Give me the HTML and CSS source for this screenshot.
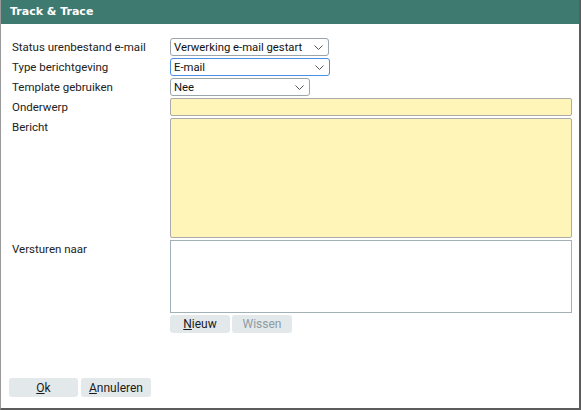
FILE: index.html
```html
<!DOCTYPE html>
<html lang="nl">
<head>
<meta charset="utf-8">
<title>Track &amp; Trace</title>
<link rel="stylesheet" href="styles.css">
</head>
<body>
<div class="window">
  <div class="header">Track &amp; Trace</div>
  <div class="form">
    <div class="label">Status urenbestand e-mail</div>
    <div class="field"><div class="select w159"><span>Verwerking e-mail gestart</span><svg class="chev" width="9" height="6" viewBox="0 0 9 6"><polyline points="0.5,0.5 4.5,4.5 8.5,0.5" fill="none" stroke="#555" stroke-width="1"/></svg></div></div>
    <div class="label">Type berichtgeving</div>
    <div class="field"><div class="select w160 focus"><span>E-mail</span><svg class="chev" width="9" height="6" viewBox="0 0 9 6"><polyline points="0.5,0.5 4.5,4.5 8.5,0.5" fill="none" stroke="#555" stroke-width="1"/></svg></div></div>
    <div class="label">Template gebruiken</div>
    <div class="field"><div class="select w140"><span>Nee</span><svg class="chev" width="9" height="6" viewBox="0 0 9 6"><polyline points="0.5,0.5 4.5,4.5 8.5,0.5" fill="none" stroke="#555" stroke-width="1"/></svg></div></div>
    <div class="label">Onderwerp</div>
    <div class="field"><div class="input req"></div></div>
    <div class="label">Bericht</div>
    <div class="field"><div class="textarea req"></div></div>
    <div class="label">Versturen naar</div>
    <div class="field">
      <div class="list"></div>
      <div class="btnrow">
        <button class="btn small"><u>N</u>ieuw</button>
        <button class="btn small disabled">Wissen</button>
      </div>
    </div>
  </div>
  <div class="footer">
    <button class="btn ok"><u>O</u>k</button>
    <button class="btn cancel"><u>A</u>nnuleren</button>
  </div>
</div>
</body>
</html>
```
FILE: styles.css
```css
html, body {
  margin: 0;
  padding: 0;
  background: #fff;
}
body {
  font-family: Roboto, "Liberation Sans", Arial, sans-serif;
  font-size: 11.5px;
  color: #222;
}
.window {
  width: 581px;
  height: 410px;
  box-sizing: border-box;
  border-left: 1px solid #9a9a9a;
  border-right: 2px solid #5c5c5c;
  border-bottom: 2px solid #5c5c5c;
  display: flex;
  flex-direction: column;
  background: #fff;
}
.header {
  height: 24px;
  line-height: 24px;
  background: #3f7a70;
  color: #fff;
  font-family: "DejaVu Sans", Verdana, sans-serif;
  font-weight: bold;
  font-size: 11px;
  padding-left: 9px;
  flex: none;
}
.form {
  display: grid;
  grid-template-columns: 158px 402px;
  row-gap: 2px;
  padding: 14px 0 0 11px;
}
.label {
  line-height: 18px;
  height: 18px;
  white-space: nowrap;
}
.field {
  display: flex;
  flex-direction: column;
  gap: 2px;
}
.select {
  box-sizing: border-box;
  height: 18px;
  border: 1px solid #9aa4aa;
  border-radius: 3px;
  background: #fff;
  display: flex;
  align-items: center;
  justify-content: space-between;
  padding: 0 5px 0 3px;
  font-size: 11.3px;
  color: #111;
  white-space: nowrap;
}
.select.focus {
  border-color: #4a8ee6;
}
.w159 { width: 159px; }
.w160 { width: 160px; }
.w140 { width: 140px; }
.chev { flex: none; margin-top: 1px; }
.input, .textarea, .list {
  box-sizing: border-box;
  width: 402px;
  border-radius: 2px;
}
.req {
  background: #fff5b8;
  border: 1px solid #aaaaaa;
}
.input { height: 18px; }
.textarea { height: 120px; }
.list {
  height: 73px;
  border: 1px solid #a2b0b8;
  border-radius: 0;
  background: #fff;
}
.btnrow {
  display: flex;
  gap: 2px;
}
.btn {
  font-family: inherit;
  font-size: 12px;
  color: #1a1a1a;
  background: #e3e8ea;
  border: none;
  border-radius: 3px;
  padding: 0;
  margin: 0;
  height: 18px;
  line-height: 18px;
}
.btn.small { width: 60px; }
.btn.disabled { color: #8d9ba3; }
.footer {
  margin-top: auto;
  display: flex;
  gap: 3px;
  padding: 0 0 11px 8px;
}
.btn.ok { width: 69px; height: 19px; }
.btn.cancel { width: 70px; height: 19px; }
```
